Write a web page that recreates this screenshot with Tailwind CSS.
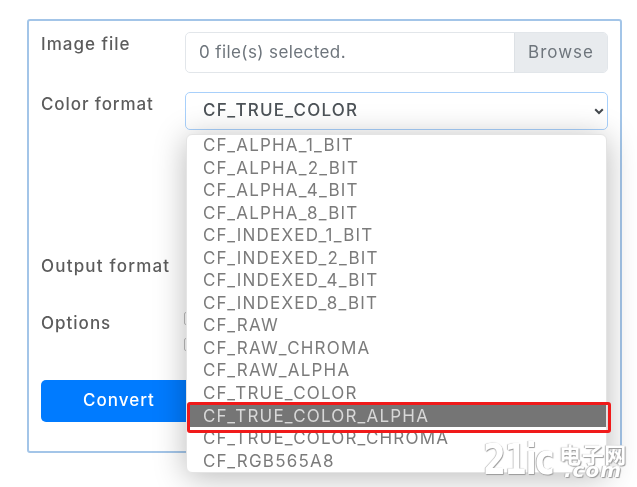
<!DOCTYPE html>
<html lang="en">
  <head>
    <meta charset="UTF-8" />
    <meta name="viewport" content="width=device-width, initial-scale=1.0" />
    <title>Image converter</title>
    <script src="https://cdn.jsdelivr.net/npm/@tailwindcss/browser@4"></script>
  </head>
  <body class="bg-white h-[487px] w-[637px] overflow-hidden font-['Inter','Open_Sans',sans-serif] text-[#5c5c5c]">
    <div class="relative h-full w-full pt-[19px] blur-[0.6px]">
      <!-- form card -->
      <form class="ml-[27px] pt-[11px] px-3 w-[595px] h-[434px] border-2 border-[#a3c5e8] rounded-[3px]">
        <div class="flex h-[41px]">
          <label class="w-[144px] text-[17px] font-medium leading-[24px] tracking-[1px]">Image file</label>
          <div class="flex flex-1 border border-[#e2e6ea] rounded-[5px] overflow-hidden text-[17px]">
            <span class="flex-1 pl-[13px] leading-[39px] text-[#6e757c] tracking-[0.4px]">0 file(s) selected.</span>
            <span class="w-[93px] bg-[#e8ebee] border-l border-[#dde1e5] text-center leading-[39px] text-[#6e757c] tracking-[1px]">Browse</span>
          </div>
        </div>

        <div class="flex h-[38px] mt-[19px]">
          <label class="w-[144px] text-[17px] font-medium leading-[24px] tracking-[0.9px]">Color format</label>
          <div class="flex flex-1 items-center justify-between pl-[17px] pr-[3px] border border-[#a8d0fb] rounded-[5px] text-[17px] font-medium text-[#4d5358] tracking-[1.2px]">
            <span>CF_TRUE_COLOR</span>
            <svg viewBox="0 0 10 10" class="w-[10px] h-[10px]" fill="none" stroke="#44494e" stroke-width="2"><path d="M1.2 3.2 5 7l3.8-3.8" /></svg>
          </div>
        </div>

        <div class="flex h-[24px] mt-[124px]">
          <label class="w-[144px] text-[17px] font-medium leading-[24px] tracking-[1.2px] whitespace-nowrap">Output format</label>
        </div>

        <div class="flex mt-[33px]">
          <label class="w-[143px] text-[17px] font-medium leading-[24px] tracking-[1px]">Options</label>
          <div class="flex flex-col gap-[13px] pt-[1px]">
            <span class="block w-[13px] h-[13px] border border-[#bdbdbd] rounded-[2px]"></span>
            <span class="block w-[13px] h-[13px] border border-[#bdbdbd] rounded-[2px]"></span>
          </div>
        </div>

        <button type="button" class="block mt-[29px] w-[156px] h-[42px] rounded-[5px] bg-[#007bff] text-white text-[17px] font-medium tracking-[1px]">Convert</button>
      </form>

      <!-- open select list -->
      <ul class="absolute left-[186px] top-[134px] w-[421px] h-[339px] bg-white rounded-[6px] border border-[#e4e4e4] shadow-[0_4px_32px_rgba(0,0,0,0.28)] overflow-hidden text-[17px] leading-[22.55px] text-[#7b7b7b] tracking-[1.2px] pl-4">
        <li class="-mt-[1px]">CF_ALPHA_1_BIT</li>
        <li>CF_ALPHA_2_BIT</li>
        <li>CF_ALPHA_4_BIT</li>
        <li>CF_ALPHA_8_BIT</li>
        <li>CF_INDEXED_1_BIT</li>
        <li>CF_INDEXED_2_BIT</li>
        <li>CF_INDEXED_4_BIT</li>
        <li>CF_INDEXED_8_BIT</li>
        <li>CF_RAW</li>
        <li>CF_RAW_CHROMA</li>
        <li>CF_RAW_ALPHA</li>
        <li>CF_TRUE_COLOR</li>
        <li class="-ml-4 pl-4 bg-[#757575] text-[#d8d8d8]">CF_TRUE_COLOR_ALPHA</li>
        <li>CF_TRUE_COLOR_CHROMA</li>
        <li>CF_RGB565A8</li>
      </ul>

      <!-- red highlight drawn over the list -->
      <div class="absolute left-[187px] top-[402px] w-[424px] h-[31px] border-[3px] border-[#f01a1a] rounded-[3px]"></div>

      <!-- watermark -->
      <div class="absolute left-[483px] top-[438px] h-[44px] flex items-end text-white [text-shadow:1px_1px_1px_#9a9a9a,-1px_0_1px_#b5b5b5]">
        <span class="font-['DejaVu_Sans',sans-serif] font-bold text-[42px] leading-[44px] tracking-[-2px] scale-x-[0.78] origin-left w-[75px]">21ic</span>
        <span class="flex flex-col items-center w-[70px] mb-[4px]">
          <span class="font-['Noto_Sans_CJK_SC',sans-serif] font-bold text-[22px] leading-[20px] tracking-[0.5px]">电子网</span>
          <span class="font-['DejaVu_Sans',sans-serif] font-bold italic text-[20px] leading-[15px] tracking-[1px]">.com</span>
        </span>
      </div>
    </div>
  </body>
</html>
